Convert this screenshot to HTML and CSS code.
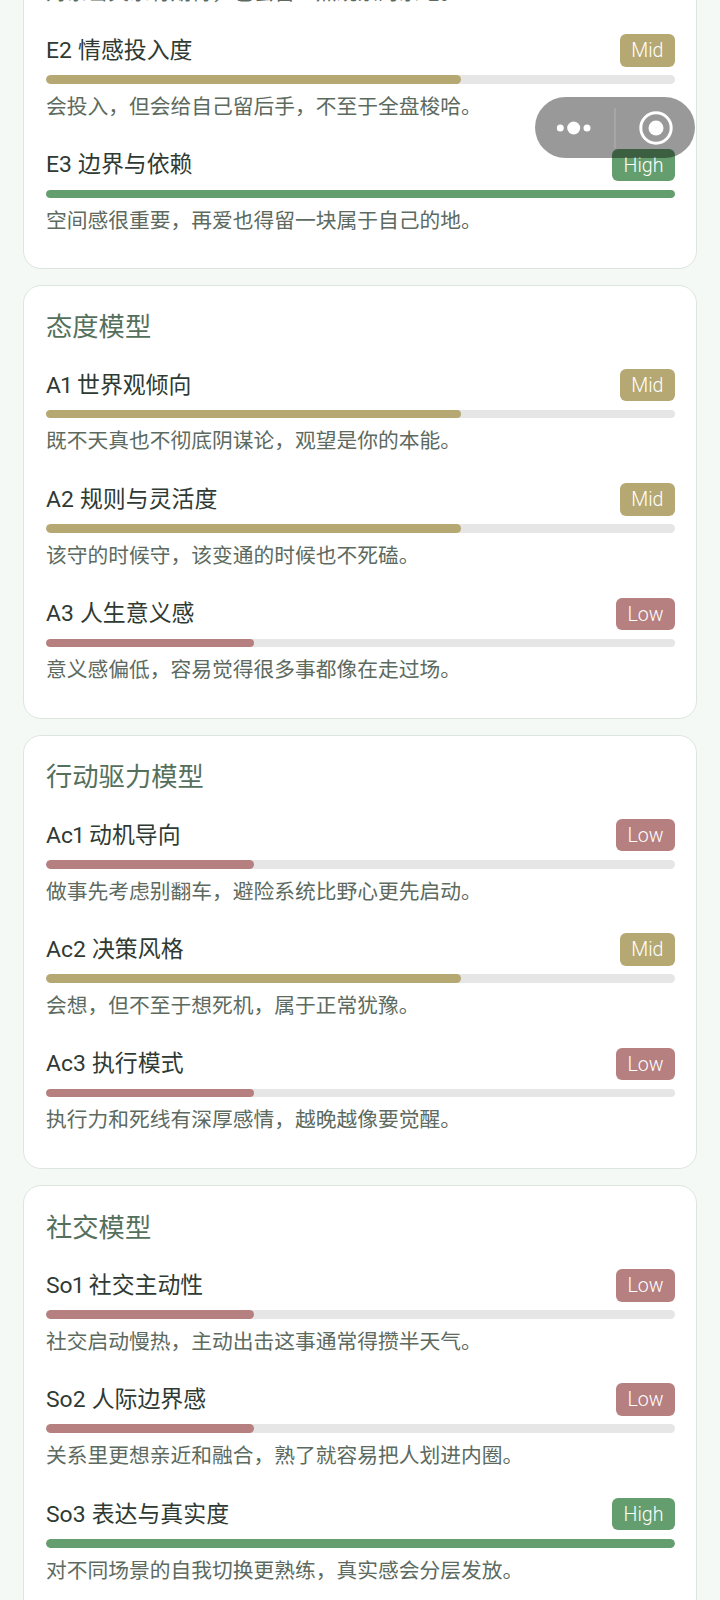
FILE: index.html
```html
<!DOCTYPE html>
<html lang="zh-CN">
<head>
<meta charset="utf-8">
<title>模型详情</title>
<link rel="stylesheet" href="styles.css">
</head>
<body>
<main class="page">
  <section class="card card-first">
    <div class="item">
      <div class="item-head"><span class="label">E1 依恋安全感</span><span class="tag mid">Mid</span></div>
      <div class="track"><div class="fill fill-mid"></div></div>
      <p class="desc">对亲密关系有期待，也会留一点观察的余地。</p>
    </div>
    <div class="item">
      <div class="item-head"><span class="label">E2 情感投入度</span><span class="tag mid">Mid</span></div>
      <div class="track"><div class="fill fill-mid"></div></div>
      <p class="desc">会投入，但会给自己留后手，不至于全盘梭哈。</p>
    </div>
    <div class="item">
      <div class="item-head"><span class="label">E3 边界与依赖</span><span class="tag high">High</span></div>
      <div class="track"><div class="fill fill-high"></div></div>
      <p class="desc">空间感很重要，再爱也得留一块属于自己的地。</p>
    </div>
  </section>

  <section class="card">
    <h2 class="card-title">态度模型</h2>
    <div class="item">
      <div class="item-head"><span class="label">A1 世界观倾向</span><span class="tag mid">Mid</span></div>
      <div class="track"><div class="fill fill-mid"></div></div>
      <p class="desc">既不天真也不彻底阴谋论，观望是你的本能。</p>
    </div>
    <div class="item">
      <div class="item-head"><span class="label">A2 规则与灵活度</span><span class="tag mid">Mid</span></div>
      <div class="track"><div class="fill fill-mid"></div></div>
      <p class="desc">该守的时候守，该变通的时候也不死磕。</p>
    </div>
    <div class="item">
      <div class="item-head"><span class="label">A3 人生意义感</span><span class="tag low">Low</span></div>
      <div class="track"><div class="fill fill-low"></div></div>
      <p class="desc">意义感偏低，容易觉得很多事都像在走过场。</p>
    </div>
  </section>

  <section class="card">
    <h2 class="card-title">行动驱力模型</h2>
    <div class="item">
      <div class="item-head"><span class="label">Ac1 动机导向</span><span class="tag low">Low</span></div>
      <div class="track"><div class="fill fill-low"></div></div>
      <p class="desc">做事先考虑别翻车，避险系统比野心更先启动。</p>
    </div>
    <div class="item">
      <div class="item-head"><span class="label">Ac2 决策风格</span><span class="tag mid">Mid</span></div>
      <div class="track"><div class="fill fill-mid"></div></div>
      <p class="desc">会想，但不至于想死机，属于正常犹豫。</p>
    </div>
    <div class="item">
      <div class="item-head"><span class="label">Ac3 执行模式</span><span class="tag low">Low</span></div>
      <div class="track"><div class="fill fill-low"></div></div>
      <p class="desc">执行力和死线有深厚感情，越晚越像要觉醒。</p>
    </div>
  </section>

  <section class="card">
    <h2 class="card-title">社交模型</h2>
    <div class="item">
      <div class="item-head"><span class="label">So1 社交主动性</span><span class="tag low">Low</span></div>
      <div class="track"><div class="fill fill-low"></div></div>
      <p class="desc">社交启动慢热，主动出击这事通常得攒半天气。</p>
    </div>
    <div class="item">
      <div class="item-head"><span class="label">So2 人际边界感</span><span class="tag low">Low</span></div>
      <div class="track"><div class="fill fill-low"></div></div>
      <p class="desc">关系里更想亲近和融合，熟了就容易把人划进内圈。</p>
    </div>
    <div class="item">
      <div class="item-head"><span class="label">So3 表达与真实度</span><span class="tag high">High</span></div>
      <div class="track"><div class="fill fill-high"></div></div>
      <p class="desc">对不同场景的自我切换更熟练，真实感会分层发放。</p>
    </div>
  </section>
</main>

<div class="capsule" aria-hidden="true">
  <svg class="capsule-icon" width="160" height="61" viewBox="0 0 160 61">
    <circle cx="25.3" cy="31" r="3.5" fill="#fff"/>
    <circle cx="38.7" cy="31" r="6.5" fill="#fff"/>
    <circle cx="52" cy="31" r="3.5" fill="#fff"/>
    <line x1="80" y1="11" x2="80" y2="51" stroke="#b4b4b4" stroke-width="1"/>
    <circle cx="121" cy="31" r="15.2" fill="none" stroke="#fff" stroke-width="3"/>
    <circle cx="121" cy="31" r="7.5" fill="#fff"/>
  </svg>
</div>
</body>
</html>
```
FILE: styles.css
```css
* { box-sizing: border-box; }
html, body { margin: 0; padding: 0; height: 1600px; overflow: hidden; }
body {
  background: #f4f9f6;
  font-family: "Roboto", "Noto Sans CJK SC", sans-serif;
  color: #2f3a33;
}
.page {
  display: flex;
  flex-direction: column;
  gap: 16.2px;
  padding: 0 23px;
  margin-top: -103.6px;
}
.card {
  background: #fff;
  border: 1px solid #dbe6df;
  border-radius: 18px;
  padding: 22.5px 21px 5.8px 22px;
}
.card-first { padding-bottom: 4.5px; }
.card-title {
  margin: 0 0 22.5px;
  font-size: 26.3px;
  line-height: 38px;
  font-weight: 400;
  color: #54705c;
}
.item { height: 114.4px; }
.item-head {
  display: flex;
  justify-content: space-between;
  align-items: center;
  height: 32.5px;
}
.label {
  font-size: 22.9px;
  line-height: 33px;
  color: #2f3a33;
  font-variant-numeric: proportional-nums;
  word-spacing: 0.5px;
}
.tag {
  height: 32.5px;
  line-height: 34.5px;
  padding: 0 11.5px;
  border-radius: 6px;
  font-size: 19.6px;
  font-weight: 300;
  color: #fff;
}
.mid { background: #b5a873; }
.high { background: #659e6e; }
.low { background: #b67f80; }
.track {
  height: 8.7px;
  margin-top: 8.5px;
  background: #e6e6e6;
  border-radius: 5px;
  overflow: hidden;
}
.fill { height: 100%; border-radius: 5px; }
.fill-mid { width: 66%; background: #b5a873; }
.fill-high { width: 100%; background: #659e6e; }
.fill-low { width: 33%; background: #b67f80; }
.desc {
  margin: 8px 0 0;
  font-size: 20.75px;
  line-height: 30px;
  color: #5c6a60;
  white-space: nowrap;
}
.capsule {
  position: absolute;
  left: 535px;
  top: 97px;
  width: 160px;
  height: 61px;
  border-radius: 31px;
  background: rgba(0, 0, 0, 0.4);
}
.capsule-icon { display: block; }
```
